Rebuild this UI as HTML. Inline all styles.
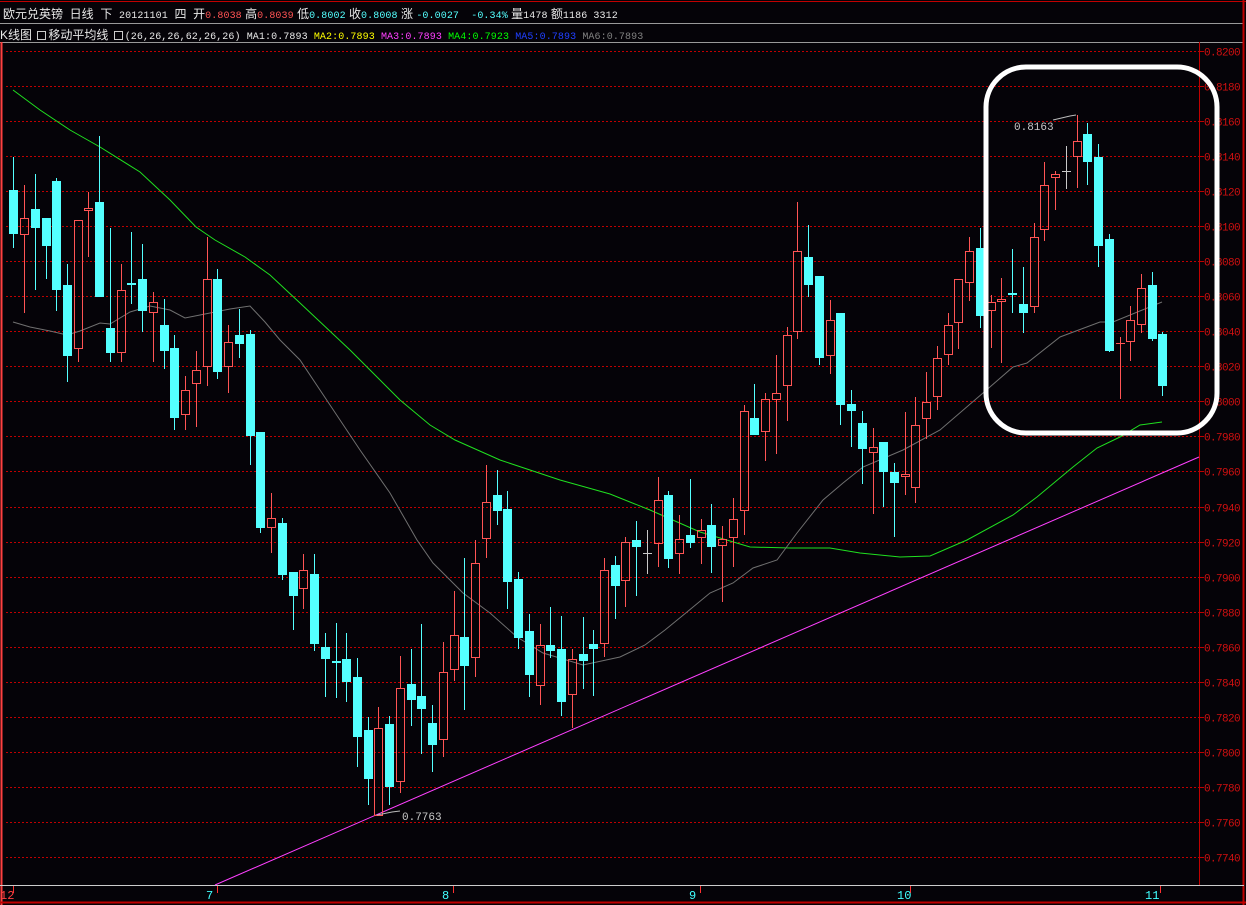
<!DOCTYPE html>
<html><head><meta charset="utf-8"><style>
html,body{margin:0;padding:0;background:#050308;}
body{width:1246px;height:905px;overflow:hidden;position:relative;font-family:"Liberation Mono","Noto Sans CJK SC",monospace;}
.r1{position:absolute;left:3px;top:5px;font-size:12px;color:#e8e8e8;white-space:nowrap;font-family:"Liberation Sans","Noto Sans CJK SC",sans-serif;}
.r2{position:absolute;left:0px;top:26px;font-size:12px;color:#e8e8e8;white-space:nowrap;font-family:"Liberation Sans","Noto Sans CJK SC",sans-serif;}
.m{font-family:"Liberation Mono",monospace;font-size:10px;letter-spacing:0.1px}
.rd{color:#ff5454}.cy{color:#54ffff}.ye{color:#ffff00}.mg{color:#ff40ff}.gr{color:#00ff00}.bl{color:#2040ff}.gy{color:#808080}
.bx{display:inline-block;width:7px;height:7px;border:1px solid #ccc;position:relative;top:1px;margin:0 2px}
</style></head><body>
<div class="r1">欧元兑英镑 &nbsp;日线 &nbsp;下 &nbsp;<span class="m">20121101</span> &nbsp;四 &nbsp;开<span class="rd m">0.8038</span> 高<span class="rd m">0.8039</span> 低<span class="cy m">0.8002</span> 收<span class="cy m">0.8008</span> 涨 <span class="cy m">-0.0027 &nbsp;-0.34%</span> 量<span class="m">1478</span> 额<span class="m">1186 3312</span></div>
<div class="r2">K线图 <span class="bx"></span>移动平均线 <span class="bx"></span><span class="m">(26,26,26,62,26,26) MA1:0.7893 </span><span class="m ye">MA2:0.7893 </span><span class="m mg">MA3:0.7893 </span><span class="m gr">MA4:0.7923 </span><span class="m bl">MA5:0.7893 </span><span class="m gy">MA6:0.7893</span></div>
<svg id="s" width="1246" height="905" style="position:absolute;left:0;top:0" xmlns="http://www.w3.org/2000/svg"></svg>
<script>
var s='';
s+='<line x1="0" y1="1.5" x2="1246" y2="1.5" stroke="#c00000"/>';
s+='<line x1="0" y1="23.5" x2="1244" y2="23.5" stroke="#999"/>';
s+='<line x1="0" y1="42.5" x2="1244" y2="42.5" stroke="#999"/>';
s+='<line x1="1.5" y1="42" x2="1.5" y2="905" stroke="#ff4040" stroke-width="2"/>';
s+='<line x1="1243.5" y1="0" x2="1243.5" y2="905" stroke="#c00000" stroke-width="2"/>';
s+='<line x1="0" y1="902.5" x2="1246" y2="902.5" stroke="#c00000" stroke-width="2"/>';
s+='<line x1="0" y1="885.5" x2="1244" y2="885.5" stroke="#ccc"/>';
s+='<line x1="1199.5" y1="42" x2="1199.5" y2="885" stroke="#c00000"/>';
for(var k=0;k<24;k++){var y=Math.round(51+k*35.04)+.5;var p=(0.82-k*0.002).toFixed(4);
s+='<line x1="6" y1="'+y+'" x2="1199" y2="'+y+'" stroke="#c00000" stroke-dasharray="2 2"/>';
s+='<line x1="1199" y1="'+y+'" x2="1204" y2="'+y+'" stroke="#c00000"/>';
s+='<text x="1204" y="'+(y+4)+'" fill="#d01010" font-size="11" font-family="Liberation Mono,monospace" letter-spacing="-0.6">'+p+'</text>';}
var xl=[[13,'12','#ff4040',0],[217,'7','#40ffff',206],[453,'8','#40ffff',442],[700,'9','#40ffff',689],[910,'10','#40ffff',897],[1160,'11','#40ffff',1145]];
xl.forEach(function(a){s+='<line x1="'+(a[0]+.5)+'" y1="886" x2="'+(a[0]+.5)+'" y2="893" stroke="#ff3030"/>';s+='<text x="'+a[3]+'" y="899" fill="'+a[2]+'" font-size="12" font-family="Liberation Mono,monospace">'+a[1]+'</text>';});
function pl(pts,c){s+='<polyline fill="none" stroke="'+c+'" stroke-width="1" points="'+pts+'"/>';}
pl('13,90 40,110 70,130 100,147 140,172 170,200 196,227 215,240 245,257 270,275 300,303 350,350 400,400 430,425 455,440 500,460 560,480 610,494 650,510 700,532 750,547 790,548 830,548 860,553 900,557 930,556 967,540 1013,515 1037,497 1073,467 1097,448 1120,437 1140,425 1162,422','#20e020');
pl('13,322 30,327 50,331 67,335 80,331 100,323 110,324 130,312 150,306 170,310 185,318 200,315 230,309 250,306 265,322 280,340 300,360 330,405 360,450 390,493 417,540 433,563 463,593 490,613 517,637 543,653 583,665 620,657 645,645 665,630 687,612 710,593 733,583 753,568 777,560 797,533 823,500 843,483 863,467 903,450 940,430 983,393 1013,367 1027,363 1060,337 1100,322 1113,322 1162,302','#707070');
s+='<line x1="215" y1="885" x2="1199" y2="457" stroke="#ff40ff"/>';
var D=[['d',157,190,234,248],['u',185,218,234,313],['d',174,209,228,290],['d',218,218,246,279],['d',178,181,290,311],['d',264,285,356,382],['u',220,220,348,362],['u',192,208,210,257],['d',136,202,297,297],['d',228,328,353,362],['u',264,290,352,362],['d',232,283,285,304],['d',244,279,311,332],['u',292,302,312,362],['d',299,325,351,369],['d',335,348,418,430],['u',376,390,414,430],['u',351,370,383,427],['u',237,279,366,386],['d',269,279,372,379],['u',325,342,366,393],['d',309,335,344,358],['d',330,334,436,465],['d',432,432,528,533],['u',493,518,527,553],['d',518,523,575,580],['d',572,572,596,630],['u',554,570,588,609],['d',554,574,644,651],['d',633,647,659,697],['d',623,661,663,698],['d',633,659,682,702],['d',658,677,737,767],['d',717,730,779,805],['u',707,728,815,815],['d',716,724,787,805],['u',656,688,781,793],['d',649,684,700,726],['d',624,696,709,754],['d',705,723,745,772],['u',642,672,739,757],['u',591,635,669,681],['d',558,637,666,710],['u',540,563,657,677],['u',465,502,538,558],['d',470,495,511,525],['d',491,509,582,609],['d',572,579,638,649],['d',614,631,675,697],['u',624,645,685,705],['d',607,645,651,658],['d',616,649,702,716],['u',649,659,694,728],['d',617,654,661,689],['d',630,644,649,696],['u',558,570,643,657],['d',556,565,586,619],['u',537,542,580,607],['d',521,540,547,596],['g',530,553,553,574],['u',477,500,543,567],['d',491,495,559,568],['u',515,539,553,574],['d',479,535,543,548],['u',519,530,537,564],['d',504,525,547,573],['u',526,539,545,602],['u',498,519,537,567],['u',405,411,510,535],['d',384,418,435,435],['u',393,399,431,461],['u',355,393,399,454],['u',327,335,385,421],['u',202,251,331,339],['d',225,257,285,297],['d',276,276,358,365],['u',300,320,355,374],['d',313,313,405,425],['d',390,404,411,447],['d',411,423,449,484],['u',428,447,452,514],['d',442,442,472,507],['d',463,472,483,537],['u',412,474,476,495],['u',397,425,487,503],['u',372,402,418,439],['u',346,358,396,410],['u',313,325,354,365],['u',279,279,322,349],['u',237,251,282,301],['d',228,248,316,328],['u',295,302,310,348],['u',278,299,301,363],['d',249,293,294,313],['d',267,304,313,333],['u',223,237,306,313],['u',162,185,229,241],['u',171,174,177,210],['g',146,171,171,189],['u',115,141,156,188],['d',123,134,162,185],['d',144,157,246,267],['d',234,239,351,352],['u',337,343,343,399],['u',306,320,341,361],['u',274,288,324,333],['d',272,285,339,341],['d',332,334,386,396]];
D.forEach(function(c,i){var cx=Math.round(13.3+10.74*i);var t=c[0],h=c[1],o=c[2],b=c[3],l=c[4];
var col=t=='u'?'#ff5454':(t=='d'?'#54ffff':'#c8c8c8');var wx=cx+.5;
if(b-o<2){s+='<line x1="'+wx+'" y1="'+h+'" x2="'+wx+'" y2="'+l+'" stroke="'+col+'"/>';s+='<rect x="'+(cx-4)+'" y="'+o+'" width="9" height="'+Math.max(1,b-o+1)+'" fill="'+col+'"/>';return;}
if(t=='d'){s+='<line x1="'+wx+'" y1="'+h+'" x2="'+wx+'" y2="'+l+'" stroke="'+col+'"/>';s+='<rect x="'+(cx-4)+'" y="'+o+'" width="9" height="'+(b-o)+'" fill="'+col+'"/>';}
else{if(h<o)s+='<line x1="'+wx+'" y1="'+h+'" x2="'+wx+'" y2="'+o+'" stroke="'+col+'"/>';if(l>b)s+='<line x1="'+wx+'" y1="'+b+'" x2="'+wx+'" y2="'+l+'" stroke="'+col+'"/>';s+='<rect x="'+(cx-3.5)+'" y="'+(o+.5)+'" width="8" height="'+(b-o)+'" fill="none" stroke="'+col+'"/>';}
});
s+='<polyline points="377,815 392,812 400,811" fill="none" stroke="#bbb"/>';
s+='<text x="402" y="820" fill="#c8c8c8" font-size="11" font-family="Liberation Mono,monospace">0.7763</text>';
s+='<polyline points="1053,120 1070,116 1076,115" fill="none" stroke="#bbb"/>';
s+='<text x="1014" y="130" fill="#c8c8c8" font-size="11" font-family="Liberation Mono,monospace">0.8163</text>';
s+='<rect x="986" y="67" width="231" height="366" rx="40" ry="40" fill="none" stroke="#fff" stroke-width="5"/>';
document.getElementById('s').innerHTML=s;
</script>
</body></html>
